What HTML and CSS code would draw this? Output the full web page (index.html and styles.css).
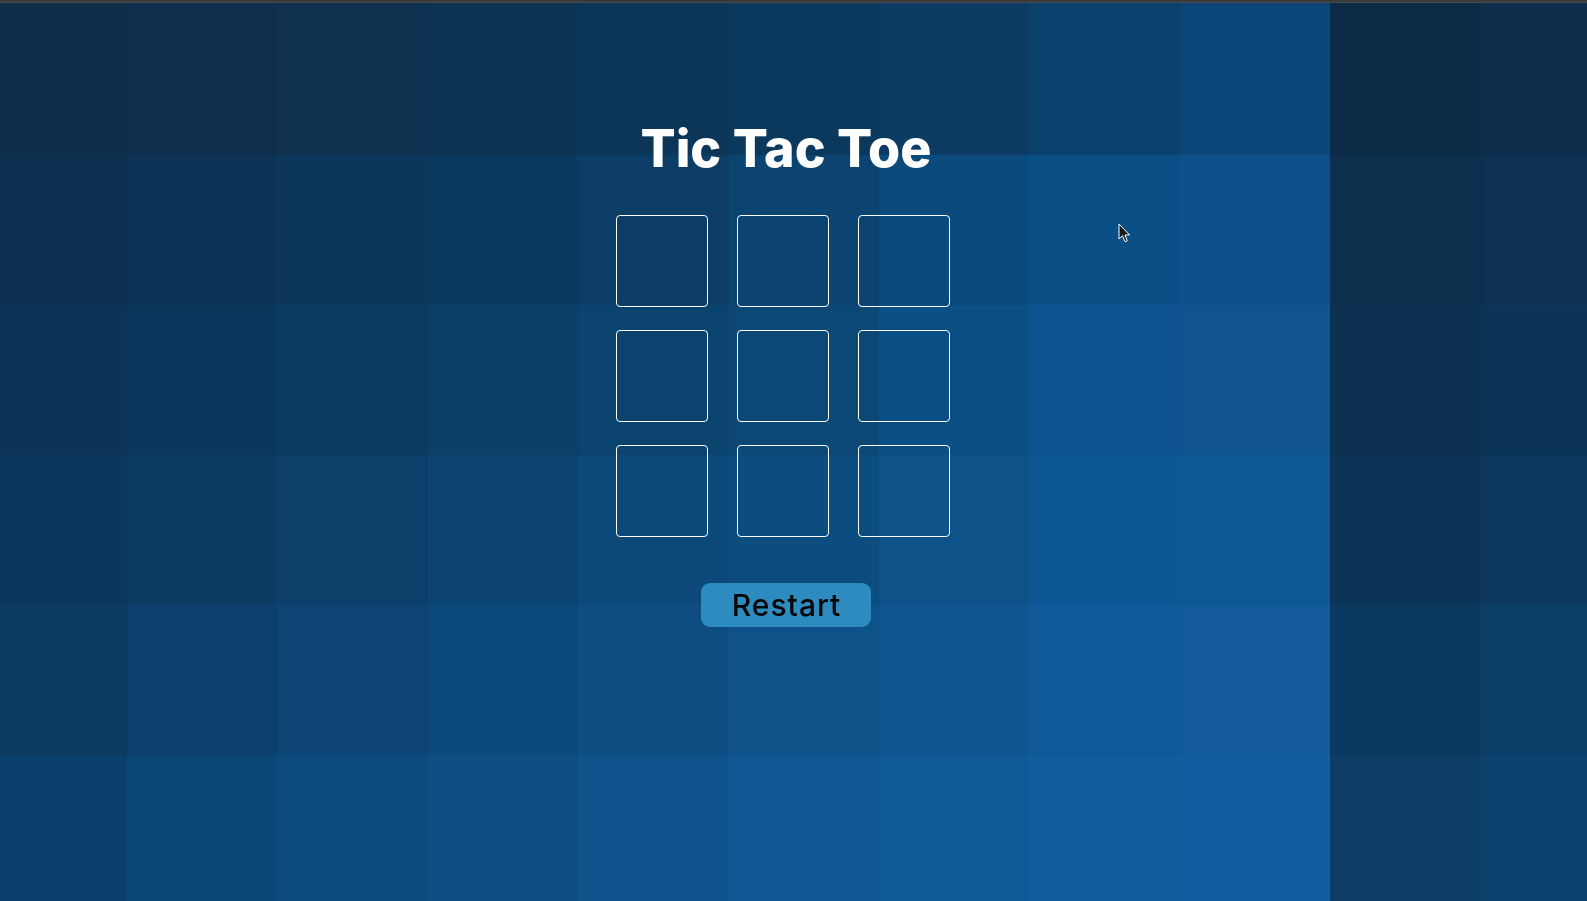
FILE: index.html
```html
<!DOCTYPE html>
<html lang="en">
<head>
<meta charset="utf-8">
<title>Tic Tac Toe</title>
<link rel="stylesheet" href="styles.css">
</head>
<body>
<div class="bg" aria-hidden="true">
  <div class="topbar"></div>
  <div class="cols">
    <div class="col c0"></div>
    <div class="col c1"></div>
    <div class="col c2"></div>
    <div class="col c3"></div>
    <div class="col c4"></div>
    <div class="col c5"></div>
    <div class="col c6"></div>
    <div class="col c7"></div>
    <div class="col c8"></div>
    <div class="col c9"></div>
    <div class="col c10"></div>
  </div>
</div>
<main class="page">
  <h1 class="title">Tic Tac Toe</h1>
  <div class="board">
    <div class="cell"></div>
    <div class="cell"></div>
    <div class="cell"></div>
    <div class="cell"></div>
    <div class="cell"></div>
    <div class="cell"></div>
    <div class="cell"></div>
    <div class="cell"></div>
    <div class="cell"></div>
  </div>
  <button class="restart" type="button">Restart</button>
</main>
<svg class="cursor" width="14" height="21" viewBox="0 0 14 21" aria-hidden="true">
  <path d="M1 1 L1 16 L4.5 12.8 L7 18.8 L9.3 17.8 L6.9 12 L11.6 12 Z" fill="#1a1a1a" stroke="#ffffff" stroke-width="1" stroke-linejoin="round"/>
</svg>
</body>
</html>
```
FILE: styles.css
```css
* { box-sizing: border-box; }

html, body {
  margin: 0;
  padding: 0;
  height: 100%;
}

body {
  font-family: Inter, "Liberation Sans", sans-serif;
  overflow: hidden;
}

/* stepped background layer */
.bg {
  position: fixed;
  inset: 0;
  z-index: -1;
  display: flex;
  flex-direction: column;
}

.topbar {
  height: 3px;
  background: linear-gradient(to bottom, #3a3a3a 0 2px, #4a4a4a 2px);
  flex: none;
}

.cols {
  flex: 1;
  display: grid;
  grid-template-columns: 127px repeat(9, 150.4px) 1fr;
}

.col { height: 100%; }

.c0 { background: linear-gradient(to bottom, #0d2d4a 0 152px, #0d3050 152px 302px, #0d3356 302px 452px, #0c365c 452px 602px, #0c3a61 602px 752px, #0b3f6b 752px); }
.c1 { background: linear-gradient(to bottom, #0d2f4d 0 152px, #0c3355 152px 302px, #0c375c 302px 452px, #0c3b64 452px 602px, #0c3f6e 602px 752px, #0b4674 752px); }
.c2 { background: linear-gradient(to bottom, #0e3150 0 152px, #0c365a 152px 302px, #0c3b62 302px 452px, #0c3f6a 452px 602px, #0d4574 602px 752px, #0d4b7e 752px); }
.c3 { background: linear-gradient(to bottom, #0c3354 0 152px, #0c3960 152px 302px, #0c3f68 302px 452px, #0c4471 452px 602px, #0c497b 602px 752px, #0d4f84 752px); }
.c4 { background: linear-gradient(to bottom, #0c3658 0 152px, #0b3d66 152px 302px, #0b436f 302px 452px, #0c4878 452px 602px, #0d4d82 602px 752px, #0e538b 752px); }
.c5 { background: linear-gradient(to bottom, #0b385d 0 152px, #0b4470 152px 302px, #0b4876 302px 452px, #0c4d80 452px 602px, #0e528a 602px 752px, #0f5792 752px); }
.c6 { background: linear-gradient(to bottom, #0c3c63 0 152px, #0b4a7c 152px 302px, #0c4f84 302px 452px, #0d5288 452px 602px, #0f5691 602px 752px, #105a98 752px); }
.c7 { background: linear-gradient(to bottom, #0b426d 0 152px, #0b4f87 152px 302px, #0c5290 302px 452px, #0d5694 452px 602px, #105998 602px 752px, #115c9e 752px); }
.c8 { background: linear-gradient(to bottom, #0b4679 0 152px, #0b508b 152px 302px, #0f548f 302px 452px, #0f5896 452px 602px, #125a9d 602px 752px, #125ca2 752px); }
.c9 { background: linear-gradient(to bottom, #0d2b47 0 152px, #0c2f4e 152px 302px, #0c304f 302px 452px, #0c3456 452px 602px, #0c3960 602px 752px, #0c3d66 752px); }
.c10 { background: linear-gradient(to bottom, #0c2e4c 0 152px, #0c3152 152px 302px, #0c3456 302px 452px, #0c3860 452px 602px, #0b3d69 602px 752px, #0b416f 752px); }

/* content */
.page {
  display: flex;
  flex-direction: column;
  align-items: center;
  padding-top: 123px;
  padding-right: 15px;
}

.title {
  margin: 0;
  font-family: Inter, "Liberation Sans", sans-serif;
  font-weight: 800;
  font-size: 52px;
  line-height: 52px;
  color: #ffffff;
  letter-spacing: 0;
}

.board {
  margin-top: 40px;
  margin-right: 6px;
  display: grid;
  grid-template-columns: repeat(3, 92px);
  grid-auto-rows: 92px;
  column-gap: 29px;
  row-gap: 23px;
}

.cell {
  border: 1px solid #ffffff;
  border-radius: 4px;
}

.restart {
  margin-top: 46px;
  width: 170px;
  height: 44px;
  border: none;
  border-radius: 9px;
  background: #2e8bc0;
  color: #050505;
  font-family: Inter, "Liberation Sans", sans-serif;
  font-weight: 500;
  font-size: 30px;
  letter-spacing: 1px;
  line-height: 44px;
  padding: 0 0 0 1px;
}

.cursor {
  position: fixed;
  left: 1118px;
  top: 223px;
}
```
